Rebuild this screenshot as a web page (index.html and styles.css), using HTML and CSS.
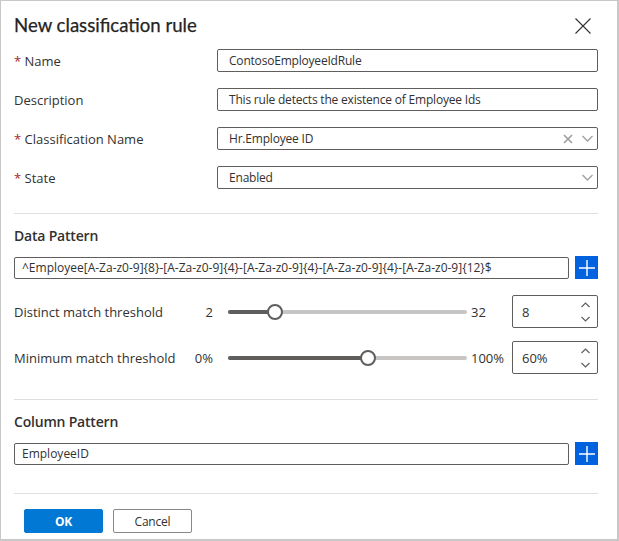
FILE: index.html
```html
<!DOCTYPE html>
<html>
<head>
<meta charset="utf-8">
<link rel="stylesheet" href="styles.css">
</head>
<body>
<div class="dialog">
  <div class="header">
    <div class="title">New classification rule</div>
    <svg class="close" width="16" height="16" viewBox="0 0 16 16"><path d="M0.5 0.5 L15.5 15.5 M15.5 0.5 L0.5 15.5" stroke="#323130" stroke-width="1.1" fill="none"/></svg>
  </div>

  <div class="row">
    <div class="label"><span class="req">*</span> Name</div>
    <div class="field"><span>ContosoEmployeeIdRule</span></div>
  </div>
  <div class="row">
    <div class="label">Description</div>
    <div class="field"><span>This rule detects the existence of Employee Ids</span></div>
  </div>
  <div class="row">
    <div class="label"><span class="req">*</span> Classification Name</div>
    <div class="field"><span>Hr.Employee ID</span>
      <span class="icons">
        <svg width="10" height="10" viewBox="0 0 10 10"><path d="M1 1 L9 9 M9 1 L1 9" stroke="#a19f9d" stroke-width="1.7" fill="none"/></svg>
        <svg width="11" height="7" viewBox="0 0 11 7"><path d="M0.5 1 L5.5 6 L10.5 1" stroke="#a19f9d" stroke-width="1.3" fill="none"/></svg>
      </span>
    </div>
  </div>
  <div class="row">
    <div class="label"><span class="req">*</span> State</div>
    <div class="field"><span>Enabled</span>
      <span class="icons">
        <svg width="11" height="7" viewBox="0 0 11 7"><path d="M0.5 1 L5.5 6 L10.5 1" stroke="#a19f9d" stroke-width="1.3" fill="none"/></svg>
      </span>
    </div>
  </div>

  <div class="divider first"></div>
  <div class="section-title">Data Pattern</div>
  <div class="pattern-row">
    <div class="pattern-input">^Employee[A-Za-z0-9]{8}-[A-Za-z0-9]{4}-[A-Za-z0-9]{4}-[A-Za-z0-9]{4}-[A-Za-z0-9]{12}$</div>
    <div class="plus"><svg width="16" height="16" viewBox="0 0 16 16"><path d="M8 0 V16 M0 8 H16" stroke="#fff" stroke-width="1.4" fill="none"/></svg></div>
  </div>

  <div class="threshold distinct">
    <div class="tlabel">Distinct match threshold</div>
    <div class="tmin">2</div>
    <div class="slider"><div class="fill" style="width:47px"></div><div class="thumb" style="left:47px"></div></div>
    <div class="tmax">32</div>
    <div class="spin"><span>8</span>
      <span class="arrows">
        <svg width="9" height="6" viewBox="0 0 9 6"><path d="M0.5 5 L4.5 1 L8.5 5" stroke="#605e5c" stroke-width="1.2" fill="none"/></svg>
        <svg width="9" height="6" viewBox="0 0 9 6"><path d="M0.5 1 L4.5 5 L8.5 1" stroke="#605e5c" stroke-width="1.2" fill="none"/></svg>
      </span>
    </div>
  </div>
  <div class="threshold minimum">
    <div class="tlabel">Minimum match threshold</div>
    <div class="tmin">0%</div>
    <div class="slider"><div class="fill" style="width:140px"></div><div class="thumb" style="left:140px"></div></div>
    <div class="tmax">100%</div>
    <div class="spin"><span>60%</span>
      <span class="arrows">
        <svg width="9" height="6" viewBox="0 0 9 6"><path d="M0.5 5 L4.5 1 L8.5 5" stroke="#605e5c" stroke-width="1.2" fill="none"/></svg>
        <svg width="9" height="6" viewBox="0 0 9 6"><path d="M0.5 1 L4.5 5 L8.5 1" stroke="#605e5c" stroke-width="1.2" fill="none"/></svg>
      </span>
    </div>
  </div>

  <div class="divider second"></div>
  <div class="section-title">Column Pattern</div>
  <div class="pattern-row col">
    <div class="pattern-input">EmployeeID</div>
    <div class="plus"><svg width="16" height="16" viewBox="0 0 16 16"><path d="M8 0 V16 M0 8 H16" stroke="#fff" stroke-width="1.4" fill="none"/></svg></div>
  </div>

  <div class="divider third"></div>
  <div class="buttons">
    <button class="btn primary">OK</button>
    <button class="btn">Cancel</button>
  </div>
</div>
</body>
</html>
```

FILE: styles.css
```css
html, body {
  margin: 0;
  padding: 0;
  background: #fff;
}
body {
  font-family: "Open Sans", "Noto Sans", sans-serif;
  color: #323130;
}
.dialog {
  box-sizing: border-box;
  width: 619px;
  height: 541px;
  border: 1px solid #c8c8c8;
  border-right-width: 2px;
  border-bottom-width: 2px;
  padding: 0 19px 0 13px;
  overflow: hidden;
}
.header {
  height: 48px;
  display: flex;
  align-items: center;
  justify-content: space-between;
}
.title {
  font-family: "Lato", "Open Sans", sans-serif;
  font-size: 18.6px;
  font-weight: 400;
  color: #252423;
  -webkit-text-stroke: 0.25px #252423;
}
.close {
  margin-right: 7px;
  margin-top: 1px;
}
.row {
  display: flex;
  align-items: center;
  height: 23px;
  margin-bottom: 16px;
}
.label {
  width: 203px;
  font-size: 13px;
}
.req {
  color: #a4262c;
}
.field {
  flex: 1;
  box-sizing: border-box;
  height: 23px;
  border: 1px solid #605e5c;
  border-radius: 2px;
  padding: 0 11px;
  display: flex;
  align-items: center;
  font-size: 12px;
  letter-spacing: -0.2px;
}
.field span:first-child {
  flex: 1;
}
.icons {
  display: flex;
  align-items: center;
  gap: 9px;
  margin-right: -7px;
}
.divider {
  height: 1px;
  background: #e1dfdd;
}
.divider.first {
  margin-top: 24px;
  margin-bottom: 12px;
}
.divider.second {
  margin-top: 25px;
  margin-bottom: 12px;
}
.divider.third {
  margin-top: 28px;
  margin-bottom: 15px;
}
.section-title {
  height: 20px;
  line-height: 20px;
  font-size: 14px;
  font-weight: 600;
  letter-spacing: -0.2px;
  margin-bottom: 10px;
}
.pattern-row {
  display: flex;
  align-items: center;
  gap: 6px;
  height: 23px;
}
.pattern-input {
  flex: 1;
  box-sizing: border-box;
  height: 22px;
  border: 1px solid #605e5c;
  border-radius: 2px;
  padding: 0 7px;
  font-size: 12px;
  letter-spacing: 0;
  line-height: 20px;
  white-space: nowrap;
  overflow: hidden;
}
.plus {
  width: 23px;
  height: 23px;
  background: #0062df;
  display: flex;
  align-items: center;
  justify-content: center;
}
.threshold {
  display: flex;
  align-items: center;
  height: 33px;
  margin-top: 16px;
  font-size: 13px;
}
.threshold.minimum {
  margin-top: 13px;
}
.tlabel {
  width: 175px;
}
.tmin {
  width: 24px;
  text-align: right;
}
.slider {
  position: relative;
  width: 239px;
  height: 4px;
  margin: 0 0 0 15px;
  background: #c8c6c4;
  border-radius: 2px;
}
.fill {
  height: 4px;
  background: #605e5c;
  border-radius: 2px;
}
.thumb {
  position: absolute;
  top: -6px;
  margin-left: -8px;
  box-sizing: border-box;
  width: 16px;
  height: 16px;
  border: 2px solid #605e5c;
  border-radius: 50%;
  background: #fff;
}
.tmax {
  width: 41px;
  padding-left: 4px;
}
.spin {
  flex: 1;
  box-sizing: border-box;
  height: 33px;
  border: 1px solid #605e5c;
  border-radius: 2px;
  display: flex;
  align-items: center;
  padding: 0 7px 0 9px;
}
.spin span:first-child {
  flex: 1;
}
.arrows {
  display: flex;
  flex-direction: column;
  gap: 8px;
}
.buttons {
  display: flex;
  gap: 10px;
  padding-left: 10px;
}
.btn {
  box-sizing: border-box;
  width: 79px;
  height: 24px;
  border: 1px solid #8a8886;
  border-radius: 2px;
  background: #fff;
  font-family: "Open Sans", "Noto Sans", sans-serif;
  font-size: 12px;
  color: #323130;
  padding: 0;
  letter-spacing: -0.2px;
}
.btn.primary {
  background: #0078d4;
  border-color: #0078d4;
  color: #fff;
  font-weight: 700;
}
```
